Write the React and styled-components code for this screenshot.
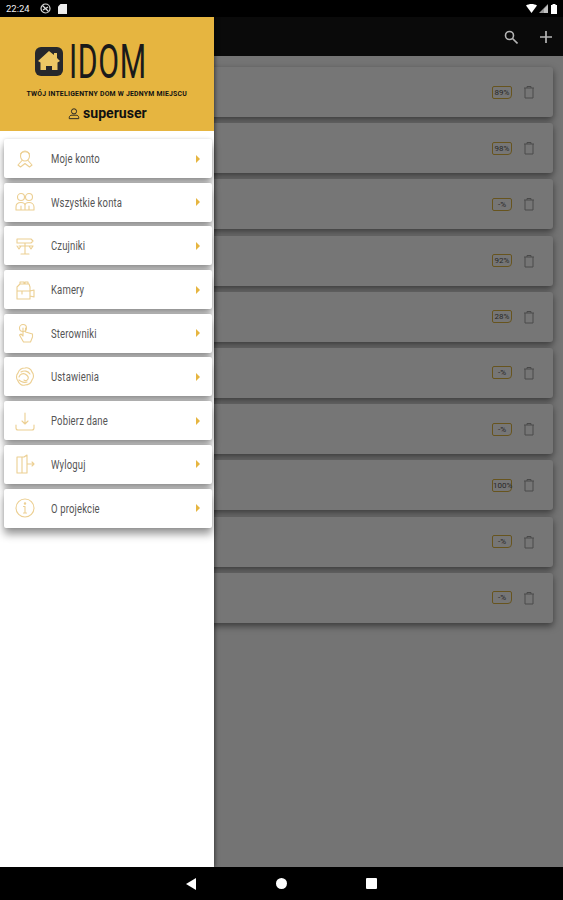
import React from 'react'
import styled, { createGlobalStyle } from 'styled-components'

const GlobalStyle = createGlobalStyle`
  html, body { margin: 0; padding: 0; background: #000; }
  body { font-family: Roboto, sans-serif; }
`

const Screen = styled.div`
  width: 563px;
  height: 900px;
  display: flex;
  flex-direction: column;
  overflow: hidden;
`

const StatusBar = styled.div`
  height: 17px;
  flex: none;
  background: #000;
  display: flex;
  align-items: center;
  justify-content: space-between;
  padding: 0 6px;
  color: #eee;
`

const StatusGroup = styled.div`
  display: flex;
  align-items: center;
  gap: ${p => p.$gap || 3}px;
`

const Clock = styled.span`
  font: 9.5px Roboto, sans-serif;
  margin-right: 3px;
`

const Main = styled.div`
  position: relative;
  flex: 1;
  display: flex;
  flex-direction: column;
  min-height: 0;
  background: #f2f2f2;
`

const Toolbar = styled.div`
  height: 39px;
  flex: none;
  background: #0a0a0a;
  display: flex;
  align-items: center;
  justify-content: flex-end;
  gap: 21px;
  padding: 0 10px 0 0;
`

const CardList = styled.div`
  display: flex;
  flex-direction: column;
  gap: 6.2px;
  padding: 11px 10px 0 100px;
`

const Card = styled.div`
  height: 50px;
  background: #f7f7f7;
  border-radius: 3px;
  box-shadow: 0 3px 7px rgba(0, 0, 0, 0.5);
  display: flex;
  align-items: center;
  justify-content: flex-end;
  gap: 10px;
  padding-right: 17px;
`

const Badge = styled.span`
  width: 18px;
  height: 11px;
  border: 1px solid #d8b040;
  border-radius: 2px 2px 4px 2px;
  font: 8px/11px Roboto, sans-serif;
  color: #555;
  text-align: center;
`

const Scrim = styled.div`
  position: absolute;
  inset: 39px 0 0 0;
  background: rgba(0, 0, 0, 0.52);
`

const Drawer = styled.aside`
  position: absolute;
  top: 0;
  bottom: 0;
  left: 0;
  width: 214px;
  background: #fff;
  box-shadow: 1px 0 4px rgba(0, 0, 0, 0.5);
`

const Header = styled.header`
  height: 114px;
  background: #e6b540;
  display: flex;
  flex-direction: column;
  align-items: center;
  box-sizing: border-box;
  padding-top: 26px;
  color: #111;
`

const Logo = styled.div`
  display: flex;
  align-items: center;
  gap: 6px;
  height: 36px;
  margin-right: 34px;
`

const LogoText = styled.span`
  display: block;
  width: 76px;
  padding-top: 2px;
  font: 400 48px/36px Roboto, sans-serif;
  letter-spacing: 1px;
  color: #1a1a1a;
  transform: scaleX(0.63);
  transform-origin: left center;
`

const Tagline = styled.div`
  margin-top: 10px;
  font: 700 7.5px/10px Roboto, sans-serif;
  letter-spacing: 0.25px;
  white-space: nowrap;
  transform: scaleX(0.915);
`

const UserRow = styled.div`
  margin-top: 6px;
  display: flex;
  align-items: center;
  gap: 3px;
  font: 700 15px/16px Roboto, sans-serif;
`

const UserName = styled.span`
  display: block;
  width: 64px;
  transform: scaleX(0.94);
  transform-origin: left center;
`

const Menu = styled.nav`
  display: flex;
  flex-direction: column;
  gap: 4.7px;
  padding: 8px 2px 0 4px;
`

const MenuItem = styled.div`
  height: 39px;
  background: #fff;
  border-radius: 2px;
  display: flex;
  align-items: center;
  box-shadow: 0 6px 9px rgba(0, 0, 0, 0.42), 0 0 3px rgba(0, 0, 0, 0.12);
  color: #555;
  font-size: 12.5px;
  letter-spacing: 0.2px;
  padding: 0 12px 0 10px;
`

const MenuIcon = styled.svg`
  width: 22px;
  height: 22px;
  flex: none;
  margin-right: 15px;
  fill: none;
  stroke: #eccf92;
  stroke-width: 1.1;
  stroke-linecap: round;
  stroke-linejoin: round;
`

const MenuLabel = styled.span`
  flex: 1;
  transform: scaleX(0.76);
  transform-origin: left center;
  white-space: nowrap;
`

const Caret = styled.span`
  width: 0;
  height: 0;
  border-left: 4px solid #e6b540;
  border-top: 4px solid transparent;
  border-bottom: 4px solid transparent;
`

const NavBar = styled.div`
  height: 33px;
  flex: none;
  background: #000;
  display: flex;
  align-items: center;
  justify-content: center;
  gap: 79.5px;
`

const menu = [
  ['Moje konto', <><ellipse cx="11" cy="8" rx="4.500" ry="5" /><path d="M6.500 6C8 3 14 3 15.500 6M8 12.500L4 17l2.500 2L11 15.500 15.500 19l2.500-2-4-4.500" /></>],
  ['Wszystkie konta', <><circle cx="7" cy="6" r="3.500" /><circle cx="15" cy="6" r="3.500" /><path d="M2 19v-3c0-3 2-4.500 5-4.500s4 1 4 3c0-2 1.500-3 4-3s5 1.500 5 4.500v3M2 19h18M7 15v4M15 15v4M11 14.500V19" /></>],
  ['Czujniki', <><path d="M3 4h14l2 2-2 2H3zM5 11h14M11 8v11M7 19h8M3 11l2 3 2-3M15 11l2 3 2-3" /></>],
  ['Kamery', <><path d="M3 20V8l3-3h9l1 3v12zM16 12l4-1v7l-4-1M6 5V3h4v2M11 5V3h3v2M3 12h13M8 12v3" /></>],
  ['Sterowniki', <><circle cx="9" cy="6" r="3.500" /><path d="M9 6v8l-2-2-1.500 1 4 7h7l2-5v-3l-7-2V6" /></>],
  ['Ustawienia', <><path d="M11 2c3-1 6 1 7 4 2 2 2 6 0 8-1 3-4 5-7 5-3 1-6-1-7-4-2-2-2-6 0-8 1-3 4-5 7-5z" /><path d="M7 6c3-2 7-1 9 2M5 11c1-3 4-4 6-3s4 3 3 5-3 2-4 1M5 14c2 2 6 3 8 2" /></>],
  ['Pobierz dane', <><path d="M11 3v11M8 11l3 3 3-3M2 15v3c0 1 1 2 2 2h14c1 0 2-1 2-2v-3" /></>],
  ['Wyloguj', <><path d="M3 4h7l3-2v18H3zM8 4v16M13 11h7M18 9l2 2-2 2" /></>],
  ['O projekcie', <><circle cx="11" cy="11" r="9" /><circle cx="11" cy="6.500" r=".7" /><path d="M11 9.500V16M9.500 16h3M9.500 9.500H11" /></>],
]

const levels = ['89%', '98%', '-%', '92%', '28%', '-%', '-%', '100%', '-%', '-%']

const TrashIcon = () => (
  <svg width="14" height="14" viewBox="0 0 14 14" fill="none" stroke="#9a9a9a" strokeWidth="1">
    <path d="M2 3h10M5 3V1.500h4V3M3 3v10h8V3" />
  </svg>
)

const App = () => {
  return (
    <Screen>
      <GlobalStyle />
      <StatusBar>
        <StatusGroup $gap={7}>
          <Clock>22:24</Clock>
          <svg width="11" height="11" viewBox="0 0 11 11" fill="none" stroke="#ddd" strokeWidth="1.2">
            <circle cx="5.500" cy="5.500" r="4.500" />
            <path d="M2.500 2.500l6 6M3 7l5-3" />
          </svg>
          <svg width="9" height="10" viewBox="0 0 9 10" fill="#eee"><path d="M2.500 0H9v10H0V2.500z" /></svg>
        </StatusGroup>
        <StatusGroup $gap={2}>
          <svg width="11" height="9" viewBox="0 0 11 9" fill="#fff"><path d="M0 1.500C3-.5 8-.5 11 1.500L5.500 9z" /></svg>
          <svg width="10" height="9" viewBox="0 0 10 9"><path d="M0 9L9 0v9z" fill="#999" /><path d="M5 5L9 1v8H5z" fill="#fff" fillOpacity=".4" /></svg>
          <svg width="6" height="10" viewBox="0 0 6 10" fill="#fff"><path d="M1.500 0h3v1H6v9H0V1h1.500z" /></svg>
        </StatusGroup>
      </StatusBar>
      <Main>
        <Toolbar>
          <svg width="14" height="14" viewBox="0 0 14 14" fill="none" stroke="#b5b5b5" strokeWidth="1.6">
            <circle cx="5.500" cy="5.500" r="4" /><path d="M8.500 8.500L13.500 13.500" />
          </svg>
          <svg width="14" height="14" viewBox="0 0 14 14" fill="none" stroke="#b5b5b5" strokeWidth="1.7">
            <path d="M7 1v12M1 7h12" />
          </svg>
        </Toolbar>
        <CardList>
          {levels.map((level, i) => (
            <Card key={i}>
              <Badge>{level}</Badge>
              <TrashIcon />
            </Card>
          ))}
        </CardList>
        <Scrim />
        <Drawer>
          <Header>
            <Logo>
              <svg width="28" height="29" viewBox="0 0 28 29">
                <rect width="28" height="29" rx="6" fill="#26282c" />
                <path d="M14 4l5 4V6h3v5l3 3-2.500 1.500V23H17v-4h-6v4H5.500v-7.500L3 14z" fill="#ecc765" />
              </svg>
              <LogoText>IDOM</LogoText>
            </Logo>
            <Tagline>TWÓJ INTELIGENTNY DOM W JEDNYM MIEJSCU</Tagline>
            <UserRow>
              <svg width="12" height="13" viewBox="0 0 14 14" fill="none" stroke="#222" strokeWidth="1.1">
                <circle cx="7" cy="4.500" r="3" /><path d="M1.500 13v-1.500c0-1.500 1.500-2.500 3-2.500h5c1.500 0 3 1 3 2.500V13z" />
              </svg>
              <UserName>superuser</UserName>
            </UserRow>
          </Header>
          <Menu>
            {menu.map(([label, icon]) => (
              <MenuItem key={label}>
                <MenuIcon viewBox="0 0 22 22">{icon}</MenuIcon>
                <MenuLabel>{label}</MenuLabel>
                <Caret />
              </MenuItem>
            ))}
          </Menu>
        </Drawer>
      </Main>
      <NavBar>
        <svg width="10" height="12" viewBox="0 0 10 12" fill="#fff"><path d="M10 0v12L0 6z" /></svg>
        <svg width="11" height="11" viewBox="0 0 11 11" fill="#fff"><circle cx="5.500" cy="5.500" r="5.500" /></svg>
        <svg width="11" height="11" viewBox="0 0 11 11" fill="#fff"><rect width="11" height="11" rx="1" /></svg>
      </NavBar>
    </Screen>
  )
}

export default App
